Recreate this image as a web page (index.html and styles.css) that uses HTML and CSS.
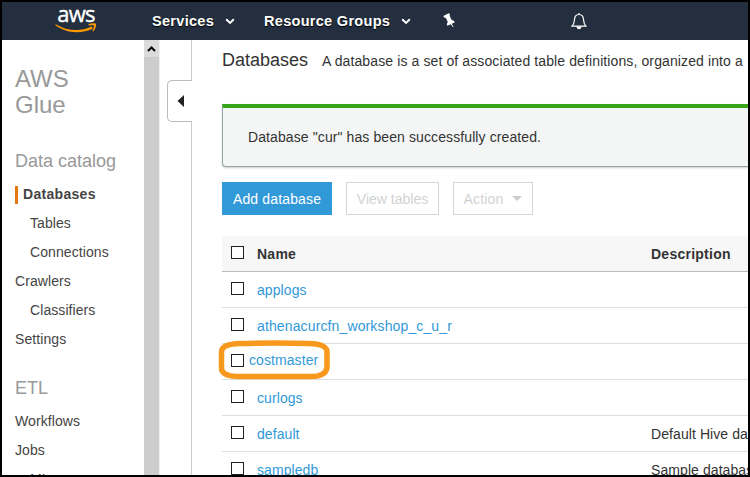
FILE: index.html
```html
<!DOCTYPE html>
<html lang="en">
<head>
<meta charset="utf-8">
<title>AWS Glue</title>
<link rel="stylesheet" href="styles.css">
</head>
<body>
<div class="window">
  <header class="topbar">
    <div class="logo">
      <span class="logo-text">aws</span>
      <svg class="smile" width="42" height="11" viewBox="0 0 42 11"><path d="M.7 1.2C12 8.200 26 8.800 36.500 3.500l1.400 1.900C26 11.600 10 10 .2 2z" fill="#f90"/><path d="M33.500 1.200C36 .2 39 0 41 .8c.4 2.500-.8 5.700-2.800 7.700l-.8-.5c.8-2 1.700-4 1.500-5.400-1.200-.6-3.500-.4-5.300-.2z" fill="#f90"/></svg>
    </div>
    <div class="menu services"><span>Services</span><svg width="10" height="7" viewBox="0 0 10 7"><path d="M1.200 1.300 5 4.900 8.800 1.300"/></svg></div>
    <div class="menu groups"><span>Resource Groups</span><svg width="10" height="7" viewBox="0 0 10 7"><path d="M1.200 1.300 5 4.900 8.800 1.300"/></svg></div>
    <svg class="pin" width="13" height="15" viewBox="0 0 13 15"><path d="M5.700.2 7 1.200 6.600 2.800 8.700 7l2.200.7.800 1.700-3 1.300 1.900 3.300-.5.200-2.500-2.900-3.100 1.500-.8-1.600 1.100-2.100L2.900 5 1.200 4.600.3 2.900z" fill="#fff"/></svg>
    <svg class="bell" width="18" height="18" viewBox="0 0 18 18"><path d="M9 1v1.500M1.800 14.200C4 12.500 4.200 11.200 4.400 8.200 4.500 4.800 6.300 2.500 9 2.500s4.500 2.300 4.600 5.700c.2 3 .4 4.300 2.600 6z" fill="none" stroke="#fff" stroke-width="1.200" stroke-linejoin="round"/><path d="M6.500 14.500h5C11.300 18 6.700 18 6.500 14.500z" fill="#fff"/></svg>
  </header>
  <div class="body">
    <nav class="sidebar">
      <h1>AWS<br>Glue</h1>
      <h2 class="catalog">Data catalog</h2>
      <ul>
        <li class="active">Databases</li>
        <li class="sub">Tables</li>
        <li class="sub">Connections</li>
        <li>Crawlers</li>
        <li class="sub">Classifiers</li>
        <li>Settings</li>
      </ul>
      <h2 class="etl">ETL</h2>
      <ul>
        <li>Workflows</li>
        <li>Jobs</li>
        <li class="sub">ML</li>
      </ul>
    </nav>
    <div class="scrollbar"><div class="scroll-up"><svg width="9" height="6" viewBox="0 0 9 6"><path d="M1 5 4.500 1.500 8 5"/></svg></div></div>
    <div class="gutter"><div class="handle"><svg width="8" height="12" viewBox="0 0 8 12"><path d="M7 0v12L.5 6z" fill="#222"/></svg></div></div>
    <main>
      <div class="title"><span class="name">Databases</span><span class="about">A database is a set of associated table definitions, organized into a</span></div>
      <div class="alert">Database "cur" has been successfully created.</div>
      <div class="actions">
        <button class="primary">Add database</button>
        <button class="view">View tables</button>
        <button class="action">Action<i class="caret"></i></button>
      </div>
      <div class="table">
        <div class="row head"><i class="box"></i><span class="cell">Name</span><span>Description</span></div>
        <div class="row"><i class="box"></i><a class="cell">applogs</a></div>
        <div class="row"><i class="box"></i><a class="cell athena">athenacurcfn_workshop_c_u_r</a></div>
        <div class="row marked"><i class="box"></i><a class="cell">costmaster</a>
          <svg class="ring" width="114" height="41" viewBox="0 0 114 41"><path d="M22 3.500Q58 2.500 91 3.500q17.500.5 18 8v16q-1 9-16 9H22Q3.500 36.500 3.500 28V12q0-8 18.500-8.500z" fill="none" stroke="#f8981d" stroke-width="5.500"/></svg>
        </div>
        <div class="row"><i class="box"></i><a class="cell">curlogs</a></div>
        <div class="row"><i class="box"></i><a class="cell">default</a><span>Default Hive database</span></div>
        <div class="row"><i class="box"></i><a class="cell">sampledb</a><span>Sample database</span></div>
      </div>
    </main>
  </div>
</div>
</body>
</html>
```
FILE: styles.css
```css
* { box-sizing: border-box; }
body { margin: 0; background: #000; font: 14px/20px "Liberation Sans", Arial, sans-serif; color: #333; }
.window { width: 750px; height: 477px; border: 2px solid #000; background: #fff; overflow: hidden; display: flex; flex-direction: column; }
.topbar { flex: 0 0 38px; background: #232f3e; display: flex; align-items: flex-start; color: #fff; }
.logo { width: 42px; margin: 0 0 0 53px; display: flex; flex-direction: column; align-items: center; }
.logo-text { font: 22px/22px "Open Sans", sans-serif; letter-spacing: -0.8px; height: 21px; -webkit-text-stroke: .4px #fff; }
.smile { display: block; }
.menu { display: flex; align-items: center; font-size: 14.5px; font-weight: bold; height: 20px; margin-top: 9px; text-shadow: 0 1px 1px #000; white-space: nowrap; }
.menu svg { fill: none; stroke: #fff; stroke-width: 2; }
.services { margin-left: 55px; }
.services span { width: 73px; letter-spacing: .3px; }
.groups { margin-left: 29px; }
.groups span { width: 137px; letter-spacing: .3px; }
.pin { margin: 11px 0 0 32px; }
.bell { margin: 10px 0 0 114px; }
.body { flex: 1; min-height: 0; display: flex; overflow: hidden; }
.sidebar { width: 142px; flex: none; padding: 26px 0 0 13px; }
h1, h2 { margin: 0; font-weight: normal; color: #999; }
h1 { font-size: 24px; line-height: 26px; }
h2 { font-size: 18px; line-height: 22px; }
.catalog { margin-top: 32px; }
.etl { margin-top: 23px; }
ul { list-style: none; margin: 8px 0 0; padding: 0; }
li { height: 29px; line-height: 29px; color: #444; white-space: nowrap; letter-spacing: .08px; }
.sub { padding-left: 15px; }
.active { display: flex; align-items: center; font-weight: bold; letter-spacing: .3px; }
.active::before { content: ""; width: 3px; height: 18px; margin-right: 5px; background: #e47911; }
.scrollbar { flex: 0 0 16px; background: #cdcdcd; border-right: 1px solid #f0f0f0; }
.scroll-up { height: 17px; background: #dbdbdb; display: flex; justify-content: center; align-items: center; }
.scroll-up path { fill: none; stroke: #000; stroke-width: 2; }
.gutter { flex: none; width: 32px; border-right: 1px solid #ccc; padding: 40px 0 0 7px; }
.handle { width: 25px; height: 42px; border: 1px solid #bbb; border-right: 0; border-radius: 5px 0 0 5px; background: #fff; display: flex; align-items: center; padding-left: 9px; }
main { flex: 1; min-width: 0; padding-left: 30px; }
.title { display: flex; align-items: baseline; height: 64px; padding-top: 9px; white-space: nowrap; }
.name { width: 100px; flex: none; font-size: 18px; line-height: 22px; }
.about { letter-spacing: .11px; }
.alert { height: 63px; border: 1px solid #95a5a6; border-top: 4px solid #38a51a; border-right: 0; border-radius: 0 0 0 4px; padding: 19px 0 0 25px; background: #f4f6f5; box-shadow: 0 1px 2px rgba(0,0,0,.2); letter-spacing: .1px; }
.actions { display: flex; margin-top: 15px; }
button { font: 14px/20px "Liberation Sans", Arial, sans-serif; letter-spacing: .15px; height: 33px; padding: 0; border: 1px solid #d5d5d5; background: #fff; color: #d0d3d3; white-space: nowrap; }
.primary { width: 110px; background: #3199d8; border-color: #3199d8; color: #fff; margin-right: 14px; }
.view { width: 93px; margin-right: 14px; letter-spacing: 0; }
.action { width: 80px; display: flex; align-items: center; justify-content: center; }
.caret { margin-left: 9px; border: 5px solid transparent; border-top-color: #ccc; border-bottom: 0; }
.table { margin-top: 21px; }
.row { position: relative; height: 36px; display: flex; border-bottom: 1px solid #ddd; line-height: 36px; white-space: nowrap; letter-spacing: .08px; }
.row.head { background: #f7f7f7; border-color: #bbb; font-weight: bold; letter-spacing: .25px; }
.box { width: 13px; height: 13px; margin: 10px 13px 0 9px; border: 1px solid #222; background: #fff; flex: none; }
.cell { width: 394px; flex: none; }
a { color: #3199d8; }
.athena { letter-spacing: .13px; }
.marked .box { margin-right: 5px; }
.marked .cell { line-height: 32px; }
.ring { position: absolute; left: -4px; top: -4px; }
```
